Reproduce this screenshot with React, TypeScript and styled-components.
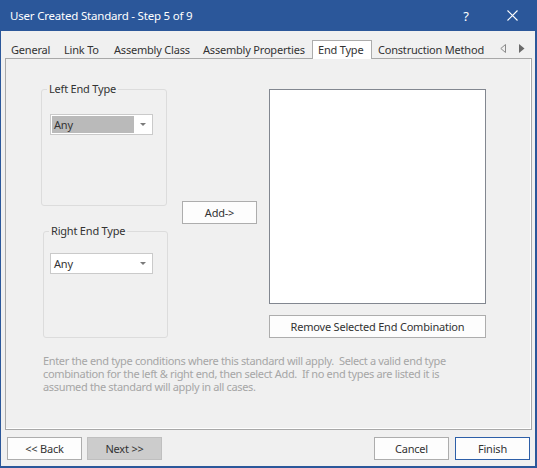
import React from "react";
import styled, { createGlobalStyle } from "styled-components";

const FONT = `"Noto Sans", "Open Sans", "Liberation Sans", sans-serif`;

const GlobalStyle = createGlobalStyle`
  html, body { margin: 0; padding: 0; background: #f0f0f0; }
  * { box-sizing: border-box; }
`;

const Window = styled.div`
  width: 537px;
  height: 468px;
  display: flex;
  flex-direction: column;
  border-style: solid;
  border-color: #2b579a;
  border-width: 0 2px 2px 1px;
  background: #f0f0f0;
  font-family: ${FONT};
  font-size: 11px;
  letter-spacing: -0.2px;
  color: #333;
  overflow: hidden;
`;

const TitleBar = styled.div`
  height: 31px;
  flex: none;
  display: flex;
  align-items: center;
  background: #2b579a;
  color: #fff;
  padding-left: 9px;
`;

const Title = styled.div`
  font-size: 11.5px;
  flex: 1;
  white-space: nowrap;
`;

const TitleButton = styled.div`
  width: 46px;
  height: 31px;
  display: flex;
  align-items: center;
  justify-content: center;
  color: #fff;
  font-size: 13px;
`;

const Body = styled.div`
  flex: 1;
  display: flex;
  flex-direction: column;
  padding: 9px 3px 6px 4px;
  min-height: 0;
`;

const TabStrip = styled.div`
  height: 19px;
  margin-bottom: -1px;
  display: flex;
  position: relative;
  z-index: 1;
`;

const Tab = styled.div<{ $w: number; $active?: boolean }>`
  width: ${(p) => p.$w}px;
  flex: none;
  display: flex;
  align-items: center;
  white-space: nowrap;
  padding-left: ${(p) => (p.$active ? 5 : 6)}px;
  padding-bottom: 1px;
  color: #333;
  background: ${(p) => (p.$active ? "#fff" : "transparent")};
  border: ${(p) => (p.$active ? "1px solid #acacac" : "none")};
  border-bottom: none;
`;

const TabArrows = styled.div`
  margin-left: auto;
  margin-right: 7px;
  display: flex;
  align-items: center;
  gap: 13px;
  padding-bottom: 2px;
`;

const Panel = styled.div`
  flex: 1;
  display: flex;
  flex-direction: column;
  border: 1px solid #a8a8a8;
  box-shadow: inset -1px -1px 0 #fff;
  padding: 30px 0 0 35px;
`;

const TopRow = styled.div`
  display: flex;
  align-items: flex-start;
`;

const GroupColumn = styled.div`
  width: 127px;
  display: flex;
  flex-direction: column;
`;

const Group = styled.div<{ $w: number; $h: number; $ml?: number; $mt?: number }>`
  width: ${(p) => p.$w}px;
  height: ${(p) => p.$h}px;
  margin-left: ${(p) => p.$ml ?? 0}px;
  margin-top: ${(p) => p.$mt ?? 0}px;
  border: 1px solid #dcdcdc;
  border-radius: 3px;
  display: flex;
  flex-direction: column;
  align-items: flex-start;
`;

const Legend = styled.div`
  margin: -9px 0 0 5px;
  padding: 0 2px;
  line-height: 16px;
  background: #f0f0f0;
  color: #333;
  white-space: nowrap;
`;

const Combo = styled.div<{ $mt: number; $ml: number }>`
  margin-top: ${(p) => p.$mt}px;
  margin-left: ${(p) => p.$ml}px;
  width: 103px;
  height: 21px;
  border: 1px solid #cacaca;
  background: #fff;
  padding: 1px;
  display: flex;
`;

const ComboValue = styled.div<{ $selected?: boolean }>`
  flex: 1;
  display: flex;
  align-items: center;
  padding-left: 2px;
  background: ${(p) => (p.$selected ? "#bababa" : "transparent")};
  color: #333;
`;

const ComboArrow = styled.div`
  width: 17px;
  display: flex;
  align-items: center;
  justify-content: center;
  &::after {
    content: "";
    border-left: 3px solid transparent;
    border-right: 3px solid transparent;
    border-top: 3px solid #7a7a7a;
  }
`;

const AddColumn = styled.div`
  margin-left: 14px;
  margin-top: 112px;
`;

const Button = styled.div<{
  $w?: number;
  $ml?: number;
  $variant?: "default" | "disabled" | "focus";
}>`
  width: ${(p) => (p.$w ? `${p.$w}px` : "100%")};
  margin-left: ${(p) => p.$ml ?? 0}px;
  height: 23px;
  flex: none;
  display: flex;
  align-items: center;
  justify-content: center;
  white-space: nowrap;
  color: #333;
  background: ${(p) => (p.$variant === "disabled" ? "#cccccc" : "#fdfdfd")};
  border: 1px solid
    ${(p) =>
      p.$variant === "focus" ? "#2d5fa8" : p.$variant === "disabled" ? "#bfbfbf" : "#adadad"};
`;

const ListColumn = styled.div`
  margin-left: 12px;
  width: 217px;
  display: flex;
  flex-direction: column;
  gap: 11px;
`;

const ListBox = styled.div`
  height: 215px;
  border: 1px solid #828790;
  background: #fff;
`;

const HelpText = styled.div`
  margin: 16px 0 0 2px;
  line-height: 13px;
  letter-spacing: -0.34px;
  color: #a6a6a6;
  white-space: pre;
`;

const Footer = styled.div`
  margin-top: 7px;
  height: 23px;
  flex: none;
  display: flex;
  padding: 0 2px;
  gap: 5px;
`;

const Spacer = styled.div`
  flex: 1;
`;

export default function App() {
  return (
    <>
      <GlobalStyle />
      <Window>
        <TitleBar>
          <Title>User Created Standard - Step 5 of 9</Title>
          <TitleButton>?</TitleButton>
          <TitleButton>
            <svg width="11" height="11" viewBox="0 0 11 11">
              <path d="M0.5 0.5 L10.5 10.5 M10.5 0.5 L0.5 10.5" stroke="#fff" strokeWidth="1.1" />
            </svg>
          </TitleButton>
        </TitleBar>
        <Body>
          <TabStrip>
            <Tab $w={53}>General</Tab>
            <Tab $w={50}>Link To</Tab>
            <Tab $w={89}>Assembly Class</Tab>
            <Tab $w={115}>Assembly Properties</Tab>
            <Tab $w={60} $active>
              End Type
            </Tab>
            <Tab $w={120}>Construction Method</Tab>
            <TabArrows>
              <svg width="6" height="9" viewBox="0 0 6 9">
                <path d="M5.5 0.5 L0.8 4.5 L5.5 8.5 Z" fill="none" stroke="#8a8a8a" strokeWidth="1" />
              </svg>
              <svg width="6" height="9" viewBox="0 0 6 9">
                <path d="M0 0 L5.5 4.5 L0 9 Z" fill="#6a6a6a" />
              </svg>
            </TabArrows>
          </TabStrip>
          <Panel>
            <TopRow>
              <GroupColumn>
                <Group $w={126} $h={117}>
                  <Legend>Left End Type</Legend>
                  <Combo $mt={17} $ml={8}>
                    <ComboValue $selected>Any</ComboValue>
                    <ComboArrow />
                  </Combo>
                </Group>
                <Group $w={125} $h={107} $ml={2} $mt={25}>
                  <Legend>Right End Type</Legend>
                  <Combo $mt={14} $ml={6}>
                    <ComboValue>Any</ComboValue>
                    <ComboArrow />
                  </Combo>
                </Group>
              </GroupColumn>
              <AddColumn>
                <Button $w={75}>Add-&gt;</Button>
              </AddColumn>
              <ListColumn>
                <ListBox />
                <Button>Remove Selected End Combination</Button>
              </ListColumn>
            </TopRow>
            <HelpText>
              {"Enter the end type conditions where this standard will apply.  Select a valid end type\ncombination for the left & right end, then select Add.  If no end types are listed it is\nassumed the standard will apply in all cases."}
            </HelpText>
          </Panel>
          <Footer>
            <Button $w={75}>&lt;&lt; Back</Button>
            <Button $w={75} $variant="disabled">
              Next &gt;&gt;
            </Button>
            <Spacer />
            <Button $w={75}>Cancel</Button>
            <Button $w={75} $ml={1} $variant="focus">
              Finish
            </Button>
          </Footer>
        </Body>
      </Window>
    </>
  );
}
